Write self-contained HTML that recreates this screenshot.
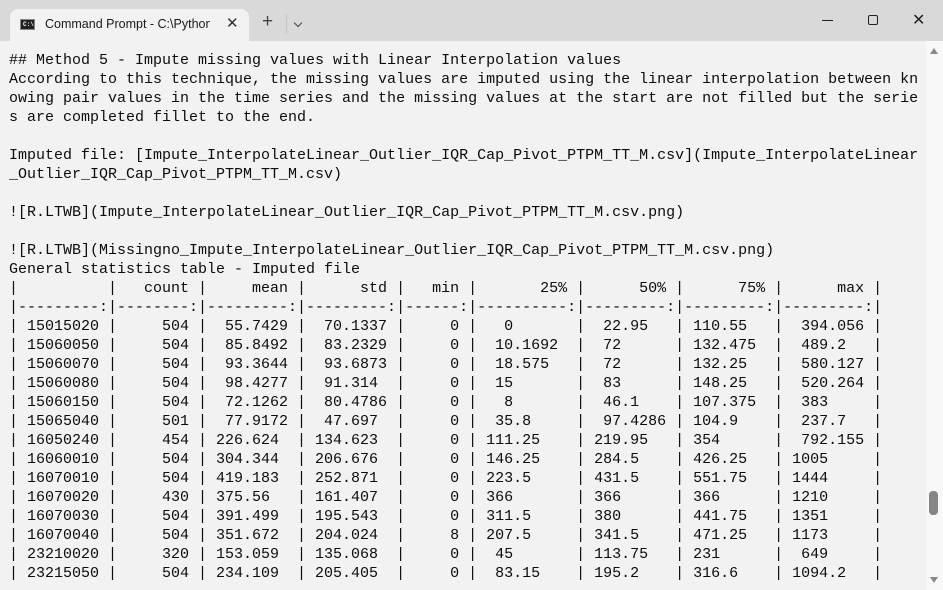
<!DOCTYPE html>
<html><head><meta charset="utf-8"><style>
html,body{margin:0;padding:0;width:943px;height:590px;overflow:hidden;background:#d9d9d9;font-family:"Liberation Sans",sans-serif}
.win{position:absolute;left:0;top:0;width:943px;height:590px;}
.tab{position:absolute;left:10px;top:9px;width:239px;height:32px;background:#f2f2f2;border-radius:8px 8px 0 0}
.tab .ico{position:absolute;left:10px;top:10px;width:15px;height:11px;background:#222;border:1px solid #888;box-sizing:border-box}
.tab .ico span{position:absolute;left:2px;top:1px;color:#fff;font:bold 6px "Liberation Mono",monospace}
.tab .t{position:absolute;left:35px;top:8px;font-size:12.5px;color:#1a1a1a;width:165px;overflow:hidden;white-space:nowrap}
.tab .x{position:absolute;left:216px;top:5px;font-size:15px;color:#333}
.plus{position:absolute;left:262px;top:11px;font-size:19px;color:#444;font-weight:300}
.sep{position:absolute;left:286px;top:14px;width:1px;height:20px;background:#c4c4c4}
.chev{position:absolute;left:295px;top:20px;width:5px;height:5px;border-right:1px solid #444;border-bottom:1px solid #444;transform:rotate(45deg)}
.min{position:absolute;left:822px;top:20px;width:11px;height:1px;background:#222}
.max{position:absolute;left:868px;top:15px;width:8px;height:8px;border:1px solid #222;border-radius:2px}
.cls{position:absolute;left:912px;top:10px;font-size:16px;color:#222}
.content{position:absolute;left:0;top:41px;width:943px;height:549px;background:#f2f2f2}
.sb{position:absolute;left:926px;top:41px;width:17px;height:549px;background:#f8f8f8}
.thumb{position:absolute;left:929px;top:491px;width:9px;height:24px;background:#858585;border-radius:4px}
.up{position:absolute;left:930px;top:48px;width:0;height:0;border-left:4px solid transparent;border-right:4px solid transparent;border-bottom:6px solid #888}
.dn{position:absolute;left:930px;top:577px;width:0;height:0;border-left:4px solid transparent;border-right:4px solid transparent;border-top:6px solid #888}
pre{position:absolute;left:9px;top:51px;margin:0;font-family:"Liberation Mono",monospace;font-size:15px;line-height:19px;color:#0c0c0c}
</style></head><body><div class="win">
<div class="tab"><div class="ico"><span>C:\</span></div><div class="t">Command Prompt - C:\Python</div><div class="x">✕</div></div>
<div class="plus">+</div><div class="sep"></div><div class="chev"></div>
<div class="min"></div><div class="max"></div><div class="cls">✕</div>
<div class="content"></div>
<div class="sb"></div><div class="up"></div><div class="thumb"></div><div class="dn"></div>
<pre>## Method 5 - Impute missing values with Linear Interpolation values
According to this technique, the missing values are imputed using the linear interpolation between kn
owing pair values in the time series and the missing values at the start are not filled but the serie
s are completed fillet to the end.

Imputed file: [Impute_InterpolateLinear_Outlier_IQR_Cap_Pivot_PTPM_TT_M.csv](Impute_InterpolateLinear
_Outlier_IQR_Cap_Pivot_PTPM_TT_M.csv)

![R.LTWB](Impute_InterpolateLinear_Outlier_IQR_Cap_Pivot_PTPM_TT_M.csv.png)

![R.LTWB](Missingno_Impute_InterpolateLinear_Outlier_IQR_Cap_Pivot_PTPM_TT_M.csv.png)
General statistics table - Imputed file
|          |   count |     mean |      std |   min |       25% |      50% |      75% |      max |
|---------:|--------:|---------:|---------:|------:|----------:|---------:|---------:|---------:|
| 15015020 |     504 |  55.7429 |  70.1337 |     0 |   0       |  22.95   | 110.55   |  394.056 |
| 15060050 |     504 |  85.8492 |  83.2329 |     0 |  10.1692  |  72      | 132.475  |  489.2   |
| 15060070 |     504 |  93.3644 |  93.6873 |     0 |  18.575   |  72      | 132.25   |  580.127 |
| 15060080 |     504 |  98.4277 |  91.314  |     0 |  15       |  83      | 148.25   |  520.264 |
| 15060150 |     504 |  72.1262 |  80.4786 |     0 |   8       |  46.1    | 107.375  |  383     |
| 15065040 |     501 |  77.9172 |  47.697  |     0 |  35.8     |  97.4286 | 104.9    |  237.7   |
| 16050240 |     454 | 226.624  | 134.623  |     0 | 111.25    | 219.95   | 354      |  792.155 |
| 16060010 |     504 | 304.344  | 206.676  |     0 | 146.25    | 284.5    | 426.25   | 1005     |
| 16070010 |     504 | 419.183  | 252.871  |     0 | 223.5     | 431.5    | 551.75   | 1444     |
| 16070020 |     430 | 375.56   | 161.407  |     0 | 366       | 366      | 366      | 1210     |
| 16070030 |     504 | 391.499  | 195.543  |     0 | 311.5     | 380      | 441.75   | 1351     |
| 16070040 |     504 | 351.672  | 204.024  |     8 | 207.5     | 341.5    | 471.25   | 1173     |
| 23210020 |     320 | 153.059  | 135.068  |     0 |  45       | 113.75   | 231      |  649     |
| 23215050 |     504 | 234.109  | 205.405  |     0 |  83.15    | 195.2    | 316.6    | 1094.2   |</pre>
</div></body></html>
